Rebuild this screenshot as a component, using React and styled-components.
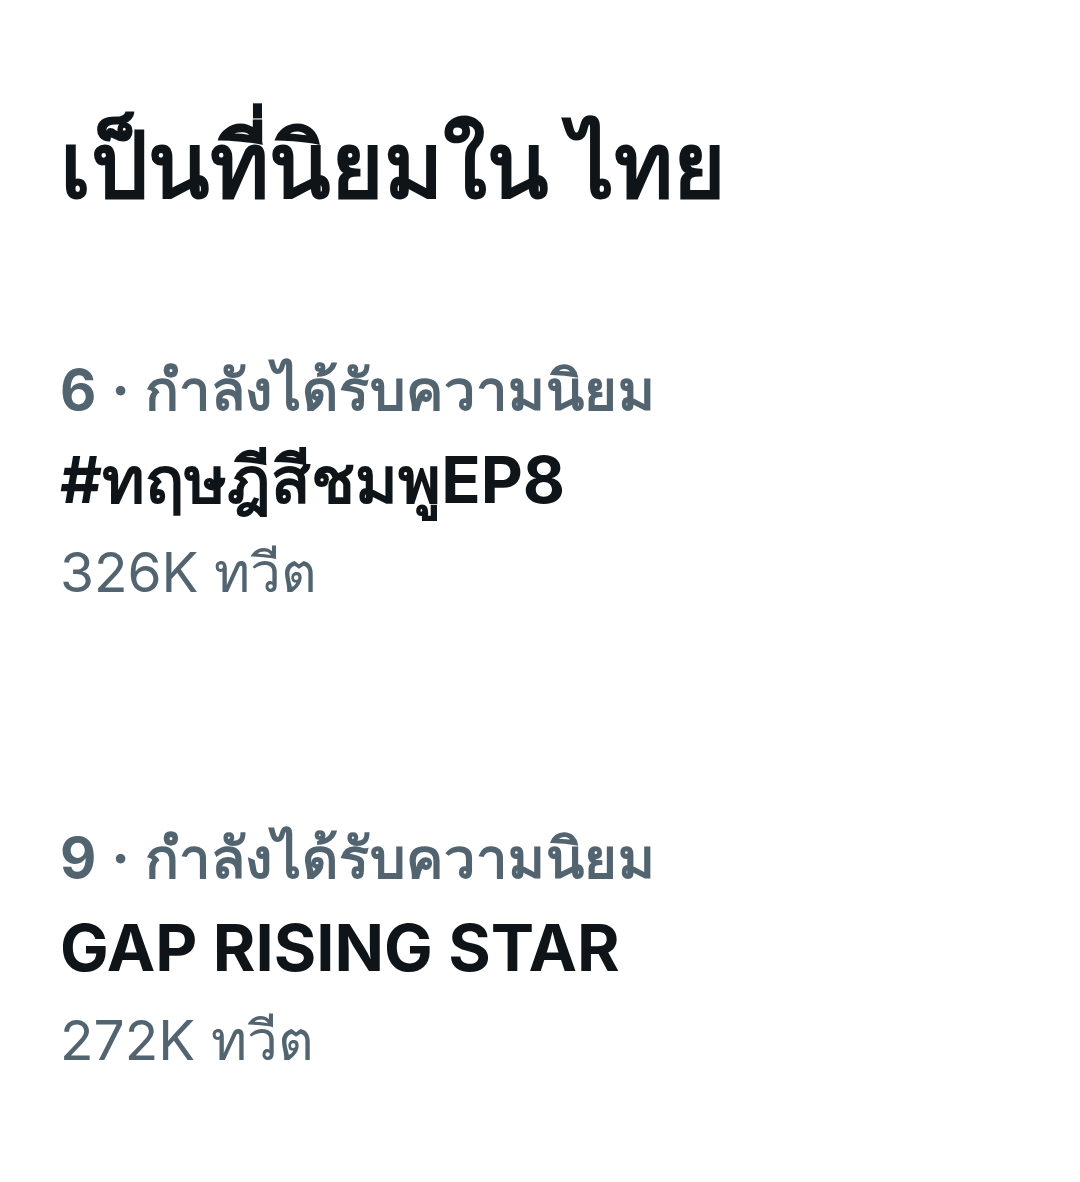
import React from 'react';
import styled, { createGlobalStyle } from 'styled-components';

const GlobalStyle = createGlobalStyle`
  body {
    margin: 0;
    background: #ffffff;
    font-family: Inter, "Noto Sans", "DejaVu Sans", sans-serif;
  }
`;

const trends = [
  { rank: 6, category: 'กำลังได้รับความนิยม', name: '#ทฤษฎีสีชมพูEP8', count: '326K ทวีต' },
  { rank: 9, category: 'กำลังได้รับความนิยม', name: 'GAP RISING STAR', count: '272K ทวีต' },
];

const App = () => (
  <Page>
    <GlobalStyle />
    <Title>เป็นที่นิยมใน ไทย</Title>
    <TrendList>
      {trends.map((t) => (
        <Trend key={t.rank}>
          <Category>{t.rank} · {t.category}</Category>
          <Name>{t.name}</Name>
          <Count>{t.count}</Count>
        </Trend>
      ))}
    </TrendList>
  </Page>
);

const Page = styled.div`
  width: 1080px;
  height: 1182px;
  box-sizing: border-box;
  padding: 111px 60px 0;
  display: flex;
  flex-direction: column;
  gap: 135px;
  overflow: hidden;
`;

const Title = styled.h1`
  margin: 0;
  font-size: 90px;
  font-weight: 800;
  line-height: 1.2;
  color: #0f1419;
`;

const TrendList = styled.div`
  display: flex;
  flex-direction: column;
  gap: 214px;
`;

const Trend = styled.div`
  display: flex;
  flex-direction: column;
  gap: 14px;
`;

const Category = styled.div`
  font-size: 56px;
  font-weight: 700;
  line-height: 1.3;
  letter-spacing: 0.8px;
  color: #536471;
`;

const Name = styled.div`
  font-size: 65px;
  font-weight: 700;
  line-height: 1.2;
  color: #0f1419;
`;

const Count = styled.div`
  margin-top: 4px;
  font-size: 55px;
  font-weight: 400;
  line-height: 1.3;
  color: #536471;
`;

export default App;
